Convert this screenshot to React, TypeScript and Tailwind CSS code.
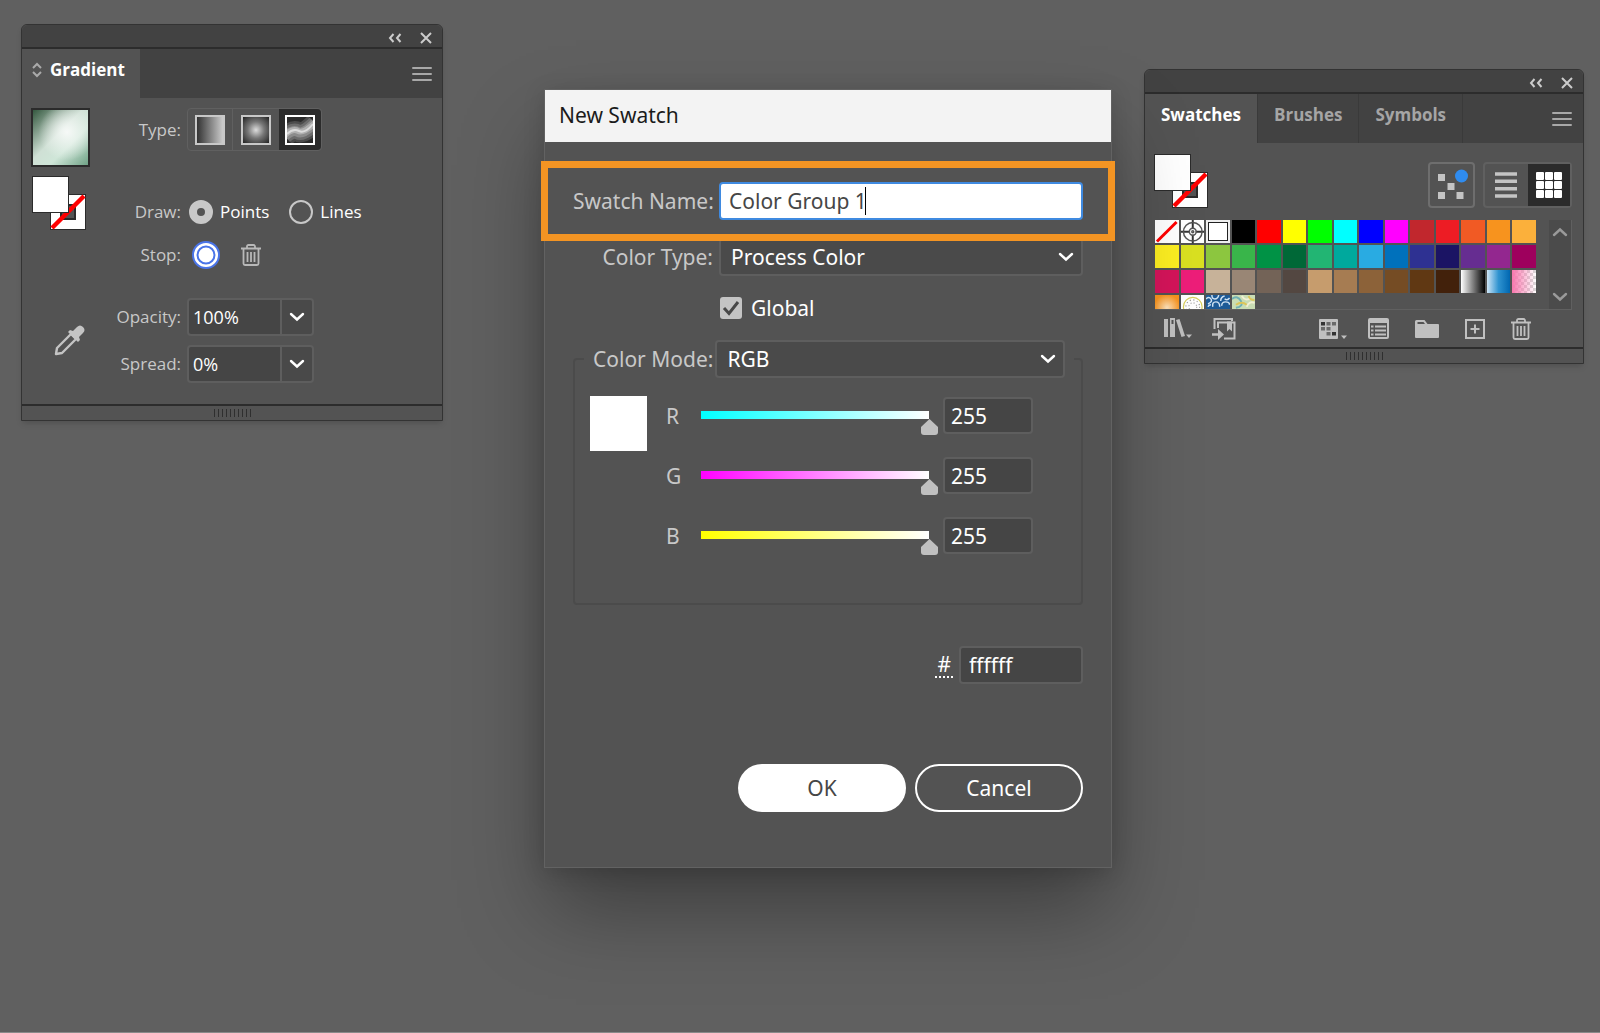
import React, { useState } from 'react';

const labelCls = 'text-right text-[#c8c8c8]';
const fieldCls = 'border-2 border-[#5e5e5e] bg-[#454545] text-white outline-none';

const swatchColors = [
    '#000000', '#ff0000', '#ffff00', '#00ff00', '#00ffff', '#0000ff', '#ff00ff', '#c1272d', '#ed1c24', '#f15a24', '#f7931e', '#fbb03b',
    '#fcee21', '#d9e021', '#8cc63f', '#39b54a', '#009245', '#006837', '#22b573', '#00a99d', '#29abe2', '#0071bc', '#2e3192', '#1b1464', '#662d91', '#93278f', '#9e005d',
    '#d4145a', '#ed1e79', '#c7b299', '#998675', '#736357', '#534741', '#c69c6d', '#a67c52', '#8c6239', '#754c24', '#603813', '#42210b',
];

const gradientSwatches = [
    { name: 'White, Black', bg: 'bg-linear-to-r/srgb from-white to-black' },
    { name: 'Sky', bg: 'bg-linear-to-r/srgb from-[#cfe6f7] via-[#2f93d0] to-[#0067b1]' },
    { name: 'Fading Pink', bg: 'bg-[linear-gradient(90deg,#f977ad,#f977ad00),repeating-conic-gradient(#d8d8d8_0_25%,#ffffff_0_50%)] bg-[length:auto,6px_6px]' },
    { name: 'Super Soft Orange', bg: 'bg-[radial-gradient(circle_at_50%_55%,#ffe3bd,#f7931e_75%)]' },
];

const channels = [
    { key: 'R', track: 'from-[#00ffff]' },
    { key: 'G', track: 'from-[#ff00ff]' },
    { key: 'B', track: 'from-[#ffff00]' },
];

const CollapseIcon = () => <svg className="h-3 w-4" viewBox="0 0 16 12" fill="none" stroke="currentColor" strokeWidth={2}><path d="M5.500 2L2 6l3.500 4M12.500 2L9 6l3.500 4" /></svg>;
const CloseIcon = () => <svg className="h-3 w-3" viewBox="0 0 12 12" fill="none" stroke="currentColor" strokeWidth={2}><path d="M1 1l10 10M11 1L1 11" /></svg>;
const MenuIcon = () => <svg className="h-[14px] w-5" viewBox="0 0 20 14" fill="none" stroke="currentColor" strokeWidth={2} strokeLinecap="round"><path d="M1 1h18M1 7h18M1 13h18" /></svg>;
const ChevronIcon = () => <svg className="h-[10px] w-4" viewBox="0 0 16 10" fill="none" stroke="currentColor" strokeWidth={2.4} strokeLinecap="round"><path d="M2 2l6 5.500L14 2" /></svg>;
const TrashIcon = () => (
    <svg className="h-[22px] w-5" viewBox="0 0 20 22" fill="none" stroke="currentColor" strokeWidth={1.8}>
        <path d="M0 4.500h20M6 4V2.500q0-1.500 1.500-1.500h5q1.500 0 1.500 1.500V4M2.500 5v14.500q0 1.500 1.500 1.500h12q1.500 0 1.500-1.500V5" />
        <path d="M6.500 8v10M10 8v10M13.500 8v10" />
    </svg>
);
const LibraryIcon = () => (
    <svg className="h-[22px] w-7" viewBox="0 0 28 22" fill="currentColor">
        <path d="M0 1h4v18H0zM6 0h5v19H6z" /><path d="M12 2l3.500-1L21 18l-3.500 1z" />
        <path d="M7.500 2h2v4h-2z" fill="#535353" /><path d="M22 16.500h6l-3 3.500z" />
    </svg>
);
const ImportIcon = () => (
    <svg className="h-[22px] w-6" viewBox="0 0 24 22" fill="none" stroke="currentColor" strokeWidth={2}>
        <path d="M2.500 11V1H20v2M6 10V4.500h16.500V20.500H12" /><path d="M15 3.500h5v10l-2.500-2.500-2.500 2.500z" fill="currentColor" stroke="none" />
        <path d="M0 16.500h8" strokeWidth={2.500} /><path d="M6 11l6 5.500-6 5.500z" fill="currentColor" stroke="none" />
    </svg>
);
const KindsIcon = () => (
    <svg className="h-5 w-7" viewBox="0 0 28 20" fill="currentColor">
        <path d="M1 0h17q1 0 1 1v18q0 1-1 1H1q-1 0-1-1V1q0-1 1-1z" /><path d="M22 16.500h6l-3 3.500z" />
        <path d="M2 3h4v3.500H2zM13 13h4v3.500h-4z" fill="#333" />
        <path d="M7.500 3h4v3.500h-4zM13 3h4v3.500h-4zM2 8h4v3.500H2zM7.500 8h4v3.500h-4zM7.500 13h4v3.500h-4z" fill="#6a6a6a" />
    </svg>
);
const OptionsIcon = () => (
    <svg className="h-[21px] w-[21px]" viewBox="0 0 21 21" fill="none" stroke="currentColor" strokeWidth={2}>
        <rect x="1" y="1" width="19" height="19" rx="1" /><path d="M1 3h19" strokeWidth={4} />
        <path d="M3 8.500h2.500M3 12.500h2.500M3 16.500h2.500M7 8.500h11M7 12.500h11M7 16.500h11" />
    </svg>
);
const FolderIcon = () => (
    <svg className="h-[18px] w-6" viewBox="0 0 24 18" fill="currentColor">
        <path d="M1.500 0h8l3 4H23q1 0 1 1v12q0 1-1 1H1q-1 0-1-1V1.500Q0 0 1.500 0z" /><path d="M2.500 2h6l1.500 2H2.500z" fill="#535353" />
    </svg>
);
const AddIcon = () => <svg className="h-5 w-5" viewBox="0 0 20 20" fill="none" stroke="currentColor" strokeWidth={2}><rect x="1" y="1" width="18" height="18" /><path d="M10 5.500v9M5.500 10h9" /></svg>;

// fill square over a stroke square set to "none"
const FillStroke = () => (
    <svg className="h-[54px] w-[54px]" viewBox="0 0 54 54">
        <rect x="18.500" y="18.500" width="35" height="35" fill="#fff" stroke="#2b2b2b" />
        <rect x="29" y="29" width="14" height="14" fill="#535353" stroke="#2b2b2b" strokeWidth="2" />
        <path d="M20 52L52 20" stroke="#f00" strokeWidth="4.500" />
        <rect x=".5" y=".5" width="36" height="36" fill="#fff" stroke="#2b2b2b" />
    </svg>
);

const TitleBar = () => (
    <div className="flex h-6 items-center justify-end gap-4 rounded-t-md border-b-2 border-[#2c2c2c] bg-[#424242] pt-[3px] pr-[10px] text-[#cccccc]">
        <button aria-label="Collapse"><CollapseIcon /></button>
        <button aria-label="Close"><CloseIcon /></button>
    </div>
);

const Grip = () => (
    <div className="flex h-4 items-center justify-center gap-[3px] border-t-2 border-[#2c2c2c]">
        {Array.from({ length: 10 }, (_, i) => <span key={i} className="h-2 w-px bg-[#2f2f2f]" />)}
    </div>
);

const ComboField: React.FC<{ id: string; label: string; value: string; onChange: (v: string) => void }> = ({ id, label, value, onChange }) => (
    <div className="flex items-center gap-[6px]">
        <label htmlFor={id} className={`w-20 ${labelCls}`}>{label}</label>
        <div className="flex">
            <input id={id} value={value} onChange={e => onChange(e.target.value)} className={`h-[38px] w-[95px] rounded-l-sm pl-1 text-lg ${fieldCls}`} />
            <button aria-label={`${label} presets`} className="flex h-[38px] w-8 items-center justify-center rounded-r-sm border-2 border-l-0 border-[#5e5e5e] bg-[#494949] text-white"><ChevronIcon /></button>
        </div>
    </div>
);

const GradientPanel = () => {
    const [draw, setDraw] = useState('Points');
    const [opacity, setOpacity] = useState('100%');
    const [spread, setSpread] = useState('0%');

    return (
        <section className="mt-6 ml-[21px] w-[422px] shrink-0 rounded-t-md border border-[#333333] bg-[#535353] text-[17px] leading-6 shadow-md">
            <TitleBar />
            <div className="flex h-[49px] items-center justify-between bg-[#424242] pr-[10px]">
                <button className="flex h-full w-[118px] items-center gap-2 bg-[#535353] pb-2 pl-[10px] font-bold text-white">
                    <svg className="h-4 w-[10px]" viewBox="0 0 10 16" fill="none" stroke="#aaa" strokeWidth="2"><path d="M1 6l4-4 4 4M1 10l4 4 4-4" /></svg>
                    Gradient
                </button>
                <button aria-label="Panel menu" className="text-[#a8a8a8]"><MenuIcon /></button>
            </div>
            <div className="flex h-[306px] pt-[10px] pl-[9px]">
                <div className="flex w-[70px] flex-col">
                    <div className="h-[59px] w-[59px] border-2 border-[#2b2b2b] bg-[radial-gradient(circle_at_62%_40%,#f6f9f7_0%,#f6f9f700_60%),linear-gradient(135deg,#34583f_0%,#cfe0d5_45%,#cfe6d8_65%,#6fa286_100%)]" />
                    <div className="mt-[9px] ml-px"><FillStroke /></div>
                    <button aria-label="Color picker" className="mt-[94px] ml-[23px] w-8 text-[#c4c4c4]">
                        <svg className="h-8 w-8" viewBox="0 0 32 32"><path d="M2 30l1-6L17 10l5 5L8 29z" fill="none" stroke="currentColor" strokeWidth="2.400" strokeLinejoin="round" /><path d="M14 8l2-2 3 1 4-4q3-3 6 0 3 3 0 6l-4 4 1 3-2 2z" fill="currentColor" /></svg>
                    </button>
                </div>
                <div className="flex flex-col">
                    <div className="flex items-center gap-[6px]">
                        <span className={`w-20 ${labelCls}`}>Type:</span>
                        <div className="flex h-[43px] rounded-sm border border-[#606060]">
                            <button aria-label="Linear gradient" className="flex w-[45px] items-center justify-center border-r border-[#606060]"><span className="h-[30px] w-[30px] border-2 border-[#c8c8c8] bg-linear-to-r/srgb from-[#333333] to-[#cccccc]" /></button>
                            <button aria-label="Radial gradient" className="flex w-[46px] items-center justify-center"><span className="h-[30px] w-[30px] border-2 border-[#c8c8c8] bg-[radial-gradient(circle,#dddddd,#777777_45%,#222222)]" /></button>
                            <button aria-label="Freeform gradient" className="flex w-[42px] items-center justify-center rounded-r-sm bg-[#2b2b2b]">
                                <svg className="h-[30px] w-[30px]" viewBox="0 0 30 30" fill="none">
                                    <rect width="30" height="30" fill="#2a2a2a" />
                                    <path d="M0 22Q8 14 13 17T30 8" stroke="#4c4c4c" strokeWidth="20" /><path d="M0 21Q8 14 13 17T30 8" stroke="#6c6c6c" strokeWidth="15" />
                                    <path d="M0 21Q8 14 13 17T30 8" stroke="#8c8c8c" strokeWidth="10" /><path d="M0 20Q8 13 13 16T30 8" stroke="#b0b0b0" strokeWidth="6" />
                                    <path d="M2 19Q8 13 14 16T28 9" stroke="#dcdcdc" strokeWidth="2" />
                                    <rect x="1" y="1" width="28" height="28" stroke="#fff" strokeWidth="2" />
                                </svg>
                            </button>
                        </div>
                    </div>
                    <div className="mt-[49px] flex h-6 items-center">
                        <span className={`w-20 ${labelCls}`}>Draw:</span>
                        {['Points', 'Lines'].map(o => (
                            <label key={o} className="mr-3 ml-2 flex items-center gap-[7px] text-white">
                                <input type="radio" name="draw" checked={draw === o} onChange={() => setDraw(o)} className="h-6 w-6 appearance-none rounded-full border-2 border-[#c8c8c8] checked:border-8" />
                                {o}
                            </label>
                        ))}
                    </div>
                    <div className="mt-4 flex h-[30px] items-center">
                        <span className={`w-20 ${labelCls}`}>Stop:</span>
                        <button aria-label="Stop color" className="ml-[10px]">
                            <svg className="h-[30px] w-[30px]" viewBox="0 0 30 30"><circle cx="15" cy="15" r="13" fill="#fff" stroke="#4a74e8" strokeWidth="2" /><circle cx="15" cy="15" r="8.500" fill="none" stroke="#4a74e8" strokeWidth="2" /></svg>
                        </button>
                        <button aria-label="Delete stop" className="ml-5 text-[#b8b8b8]"><TrashIcon /></button>
                    </div>
                    <div className="mt-7 flex flex-col gap-[9px]">
                        <ComboField id="opacity" label="Opacity:" value={opacity} onChange={setOpacity} />
                        <ComboField id="spread" label="Spread:" value={spread} onChange={setSpread} />
                    </div>
                </div>
            </div>
            <Grip />
        </section>
    );
};

const ChannelSlider: React.FC<{ name: string; track: string }> = ({ name, track }) => {
    const [value, setValue] = useState(255);

    return (
        <div className="flex h-[37px]">
            <label htmlFor={`channel-${name}`} className="w-[26px] self-center text-[#c8c8c8]">{name}</label>
            <div className="w-[246px] pt-[14px]">
                <div className={`mx-[9px] h-2 bg-linear-to-r/srgb to-white ${track}`} />
                <input type="range" min={0} max={255} value={value} onChange={e => setValue(Number(e.target.value))} aria-label={`${name} level`}
                    className="block h-4 w-full appearance-none bg-transparent [&::-webkit-slider-thumb]:h-4 [&::-webkit-slider-thumb]:w-[17px] [&::-webkit-slider-thumb]:appearance-none [&::-webkit-slider-thumb]:bg-[#c0c0c0] [&::-webkit-slider-thumb]:[clip-path:path('M8.5_0L17_8V13Q17_16_14_16H3Q0_16_0_13V8Z')]" />
            </div>
            <input id={`channel-${name}`} value={value} onChange={e => setValue(Number(e.target.value) || 0)} className={`ml-[5px] w-[90px] rounded-sm pl-[6px] ${fieldCls}`} />
        </div>
    );
};

const Dropdown: React.FC<{ id: string; options: string[] }> = ({ id, options }) => (
    <div className="relative flex-1">
        <select id={id} className="h-[38px] w-full appearance-none rounded-sm border-2 border-[#5e5e5e] bg-[#4a4a4a] pl-[10px] text-white outline-none">
            {options.map(o => <option key={o}>{o}</option>)}
        </select>
        <span className="pointer-events-none absolute top-[14px] right-[9px] text-white"><ChevronIcon /></span>
    </div>
);

const NewSwatchDialog = () => {
    const [name, setName] = useState('Color Group 1');
    const [isGlobal, setIsGlobal] = useState(true);
    const [hex, setHex] = useState('ffffff');

    return (
        <section role="dialog" aria-labelledby="dialog-title" className="relative mt-[89px] ml-[101px] w-[568px] shrink-0 border border-[#626262] bg-[#535353] font-['Noto_Sans',sans-serif] text-[21px] leading-6 shadow-[0_44px_80px_-4px_rgba(0,0,0,0.36),0_4px_20px_rgba(0,0,0,0.15)]">
            <h1 id="dialog-title" className="flex h-[52px] items-center bg-[#f3f3f3] pb-[2px] pl-[14px] text-[#1b1b1b]">New Swatch</h1>
            <form className="px-7 pt-10 pb-[55px]" onSubmit={e => e.preventDefault()}>
                <div className="relative flex items-center gap-[6px]">
                    <label htmlFor="swatch-name" className={`w-[140px] whitespace-nowrap ${labelCls}`}>Swatch Name:</label>
                    <input id="swatch-name" value={name} onChange={e => setName(e.target.value)} className="h-[38px] min-w-0 flex-1 rounded-sm border-2 border-[#3f8ae0] bg-white pl-2 text-[#464646] outline-none" />
                    <span className="absolute left-[292px] h-7 w-px bg-black" />
                </div>
                <div className="mt-[18px] flex items-center gap-[6px]">
                    <label htmlFor="color-type" className={`w-[140px] ${labelCls}`}>Color Type:</label>
                    <Dropdown id="color-type" options={['Process Color', 'Spot Color']} />
                </div>
                <label className="mt-5 ml-[147px] flex h-6 w-fit items-center gap-[9px] text-white">
                    <span className="relative flex">
                        <input type="checkbox" checked={isGlobal} onChange={e => setIsGlobal(e.target.checked)} className="h-[22px] w-[22px] appearance-none rounded-[3px] bg-[#c4c4c4]" />
                        {isGlobal && <svg className="pointer-events-none absolute h-[22px] w-[22px]" viewBox="0 0 22 22" fill="none" stroke="#484848" strokeWidth="3"><path d="M4 11l5 5.500L18 5" /></svg>}
                    </span>
                    Global
                </label>
                <fieldset className="mt-5 h-[265px] min-w-0 rounded-sm border-2 border-[#4b4b4b] pl-[9px]">
                    <legend className="flex w-[490px] items-center gap-[2px] px-[9px]">
                        <label htmlFor="color-mode" className="text-[#c8c8c8]">Color Mode:</label>
                        <Dropdown id="color-mode" options={['RGB', 'CMYK', 'HSB', 'Lab']} />
                    </legend>
                    <div className="flex gap-[19px] pt-[18px] pl-[6px]">
                        <div className="h-[55px] w-[57px] bg-white" />
                        <div className="flex flex-col gap-[23px] pt-px">
                            {channels.map(c => <ChannelSlider key={c.key} name={c.key} track={c.track} />)}
                        </div>
                    </div>
                </fieldset>
                <div className="mt-[41px] flex items-center justify-end gap-[6px]">
                    <label htmlFor="hex" className="border-b-2 border-dotted border-white px-[2px] text-white">#</label>
                    <input id="hex" value={hex} onChange={e => setHex(e.target.value)} className={`h-[38px] w-[124px] rounded-sm pl-2 ${fieldCls}`} />
                </div>
                <div className="mt-20 flex justify-end gap-[9px]">
                    <button type="submit" className="h-12 w-[168px] rounded-full bg-white text-[#464646]">OK</button>
                    <button type="button" className="h-12 w-[168px] rounded-full border-2 border-white text-white">Cancel</button>
                </div>
            </form>
            <div className="pointer-events-none absolute top-[71px] -right-1 -left-1 h-20 border-[7px] border-[#f39423]" />
        </section>
    );
};

const SwatchesPanel = () => {
    const [tab, setTab] = useState('Swatches');

    return (
        <section className="mt-[69px] mr-4 ml-auto w-[440px] shrink-0 rounded-t-md border border-[#333333] bg-[#535353] text-[17px] leading-6 shadow-md">
            <TitleBar />
            <div className="flex h-[49px] items-center bg-[#424242] pr-[11px]">
                {['Swatches', 'Brushes', 'Symbols'].map(t => (
                    <button key={t} onClick={() => setTab(t)} className={`h-full border-r border-[#3a3a3a] px-4 pb-2 font-bold ${tab === t ? 'bg-[#535353] text-white' : 'text-[#a5a5a5]'}`}>{t}</button>
                ))}
                <button aria-label="Panel menu" className="ml-auto text-[#a8a8a8]"><MenuIcon /></button>
            </div>
            <div className="flex items-end pt-[11px] pr-[11px] pl-[9px]">
                <FillStroke />
                <button aria-label="Libraries" className="ml-auto flex h-[46px] w-[47px] items-center justify-center rounded-sm border-2 border-[#6e6e6e]">
                    <svg className="h-9 w-9" viewBox="0 0 36 36" fill="#c4c4c4"><path d="M4 7h7v7H4zM13.500 16h7v7h-7zM4 25h7v7H4zM22.500 25h7v7h-7z" /><circle cx="27.500" cy="9" r="6.500" fill="#2f8cf0" /></svg>
                </button>
                <div className="ml-2 flex h-[46px] w-[89px] rounded-sm border-2 border-[#606060]">
                    <button aria-label="List view" className="flex flex-1 items-center justify-center">
                        <svg className="h-[26px] w-[22px]" viewBox="0 0 22 26" stroke="#c4c4c4" strokeWidth="3.500"><path d="M0 2h22M0 9.300h22M0 16.700h22M0 24h22" /></svg>
                    </button>
                    <button aria-label="Thumbnail view" className="flex flex-1 items-center justify-center bg-[#2b2b2b]">
                        <svg className="h-[26px] w-[26px]" viewBox="0 0 26 26" fill="#fff">
                            {[0, 9, 18].map(y => [0, 9, 18].map(x => <rect key={`${x}-${y}`} x={x} y={y} width="8" height="8" rx="1" />))}
                        </svg>
                    </button>
                </div>
            </div>
            <div className="mt-3 mr-[11px] ml-[10px] flex h-[90px] justify-between border-r border-b border-[#606060]">
                <div className="grid w-[381px] auto-rows-[23px] grid-cols-15 gap-x-[2px] gap-y-[2px] overflow-hidden">
                    <button aria-label="None" className="bg-white"><svg viewBox="0 0 24 24"><path d="M2 22L22 2" stroke="#f00" strokeWidth="3" /></svg></button>
                    <button aria-label="Registration" className="bg-white">
                        <svg viewBox="0 0 24 24" fill="none" stroke="#555" strokeWidth="1.500"><path d="M12 0v9M12 15v9M0 12h9M15 12h9" stroke="#333" strokeWidth="2" /><circle cx="12" cy="12" r="9.500" /><circle cx="12" cy="12" r="3.500" /><circle cx="12" cy="12" r="1" /></svg>
                    </button>
                    <button aria-label="White" className="border-2 border-[#eeeeee] bg-white outline-1 -outline-offset-3 outline-[#222222]" />
                    {swatchColors.map(c => <button key={c} aria-label={c} style={{ backgroundColor: c }} />)}
                    {gradientSwatches.map(g => <button key={g.name} aria-label={g.name} className={g.bg} />)}
                    <button aria-label="Dots" className="bg-white">
                        <svg viewBox="0 0 24 24" fill="none"><circle cx="12" cy="12" r="9.500" stroke="#d8cf5a" strokeWidth="1.200" /><circle cx="12" cy="12" r="7" stroke="#999" strokeWidth="1.200" strokeDasharray="1.200 2.500" /><circle cx="12" cy="12" r="4" stroke="#aaa" strokeWidth="1.200" strokeDasharray="1.200 2" /></svg>
                    </button>
                    <button aria-label="Blue foliage" className="bg-[#1d5a96]">
                        <svg viewBox="0 0 24 24" fill="none" stroke="#cfe2f2" strokeWidth="1.500"><path d="M0 4q3-3 5 0t-3 5M6 0q0 4 3 4t4-4M7 12q-1-5 3-5t4 5M15 6q0-4 4-5M16 11q0-4 4-4t4 3M19 4q3 2 5-1M2 12q1-2 3-2" /></svg>
                    </button>
                    <button aria-label="Floral" className="bg-[#c9ddb4]">
                        <svg viewBox="0 0 24 24" fill="none" strokeWidth="2"><path d="M0 4q6-4 9 2t-5 7" stroke="#6fb0b4" /><path d="M10 1q4 6 9 2M15 12q2-6 8-4" stroke="#f2f0d4" /><path d="M4 10q6-4 11 0M17 1q1 4 6 4" stroke="#dcc65a" /></svg>
                    </button>
                </div>
                <div className="flex w-[22px] flex-col items-center justify-between bg-[#4b4b4b] py-[7px] text-[#9a9a9a]">
                    <button aria-label="Scroll up" className="rotate-180"><ChevronIcon /></button>
                    <button aria-label="Scroll down"><ChevronIcon /></button>
                </div>
            </div>
            <div className="flex h-[37px] items-center pl-[19px] text-[#c0c0c0]">
                <button aria-label="Swatch libraries menu"><LibraryIcon /></button>
                <button aria-label="Add to library" className="ml-5"><ImportIcon /></button>
                <button aria-label="Show swatch kinds" className="ml-[83px]"><KindsIcon /></button>
                <button aria-label="Swatch options" className="ml-[21px]"><OptionsIcon /></button>
                <button aria-label="New color group" className="ml-[26px]"><FolderIcon /></button>
                <button aria-label="New swatch" className="ml-[26px]"><AddIcon /></button>
                <button aria-label="Delete swatch" className="ml-[26px]"><TrashIcon /></button>
            </div>
            <Grip />
        </section>
    );
};

export default function App() {
    return (
        <main className="flex min-h-screen items-start border-b border-[#8a8a8a] bg-[#606060] font-['Open_Sans',sans-serif]">
            <GradientPanel />
            <NewSwatchDialog />
            <SwatchesPanel />
        </main>
    );
}
